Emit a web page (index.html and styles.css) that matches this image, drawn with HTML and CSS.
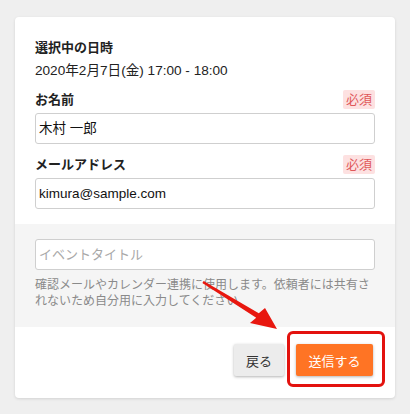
FILE: index.html
```html
<!DOCTYPE html>
<html lang="ja">
<head>
<meta charset="utf-8">
<link rel="stylesheet" href="styles.css">
</head>
<body>
<div class="card">
  <div class="main">
    <div class="label">選択中の日時</div>
    <div class="date">2020年2月7日(金) 17:00 - 18:00</div>
    <div class="field-head first">
      <span class="label">お名前</span>
      <span class="badge">必須</span>
    </div>
    <div class="input">木村 一郎</div>
    <div class="field-head">
      <span class="label">メールアドレス</span>
      <span class="badge">必須</span>
    </div>
    <div class="input">kimura@sample.com</div>
  </div>
  <div class="extra">
    <div class="input placeholder">イベントタイトル</div>
    <p class="help">確認メールやカレンダー連携に使用します。依頼者には共有されないため自分用に入力してください</p>
  </div>
  <div class="footer">
    <button class="btn back">戻る</button>
    <div class="submit-wrap">
      <button class="btn submit">送信する</button>
      <span class="highlight"></span>
    </div>
  </div>
</div>
<svg class="arrow" width="410" height="414" viewBox="0 0 410 414">
  <polygon fill="#e8170f" points="203.6,280.9 258.8,313.2 265,308 277,329 250,323 256.2,317.8 202.4,283.1"/>
</svg>
</body>
</html>
```

FILE: styles.css
```css
html, body {
  margin: 0;
  padding: 0;
}
body {
  background: #efefef;
  padding: 17px 15px 16px;
  font-family: "Liberation Sans", "Noto Sans CJK JP", sans-serif;
  color: #222;
  position: relative;
  width: 380px;
}
.card {
  background: #fff;
  border-radius: 4px;
  box-shadow: 0 1px 3px rgba(0,0,0,0.12);
  overflow: hidden;
}
.main {
  padding: 21px 20px 15px;
}
.label {
  font-size: 13px;
  font-weight: bold;
  line-height: 20px;
  color: #222;
}
.date {
  font-size: 13.6px;
  line-height: 20px;
  margin-top: 3px;
}
.field-head {
  display: flex;
  justify-content: space-between;
  align-items: center;
  height: 19px;
  margin-top: 11px;
}
.field-head.first {
  margin-top: 9px;
}
.badge {
  background: #fde1e1;
  color: #e0585a;
  font-size: 13px;
  line-height: 19px;
  padding: 0 3px;
  border-radius: 2px;
}
.input {
  margin-top: 4px;
  height: 31px;
  box-sizing: border-box;
  border: 1px solid #cfcfcf;
  border-radius: 3px;
  background: #fff;
  font-size: 13.5px;
  line-height: 29px;
  padding: 0 3px;
  color: #111;
}
.extra {
  background: #f5f5f5;
  padding: 15px 20px 18px;
}
.extra .input {
  margin-top: 0;
}
.placeholder {
  color: #a8a8a8;
  font-size: 13px;
}
.help {
  margin: 7px 0 0;
  font-size: 12px;
  line-height: 16px;
  color: #8a8a8a;
}
.footer {
  display: flex;
  justify-content: flex-end;
  align-items: center;
  gap: 12px;
  padding: 17px 22px 22px;
}
.btn {
  height: 32px;
  border: none;
  border-radius: 2px;
  font-family: inherit;
  font-size: 13px;
  padding: 0;
  box-shadow: 0 1px 3px rgba(0,0,0,0.3);
}
.back {
  width: 50px;
  background: #ececec;
  color: #333;
}
.submit-wrap {
  position: relative;
  display: flex;
}
.submit {
  width: 77px;
  background: #ff7424;
  color: #fff;
}
.highlight {
  position: absolute;
  left: -9px;
  top: -13px;
  right: -12px;
  bottom: -11px;
  border: 3px solid #e3120e;
  border-radius: 6px;
}
.arrow {
  position: absolute;
  left: 0;
  top: 0;
  pointer-events: none;
}
```
